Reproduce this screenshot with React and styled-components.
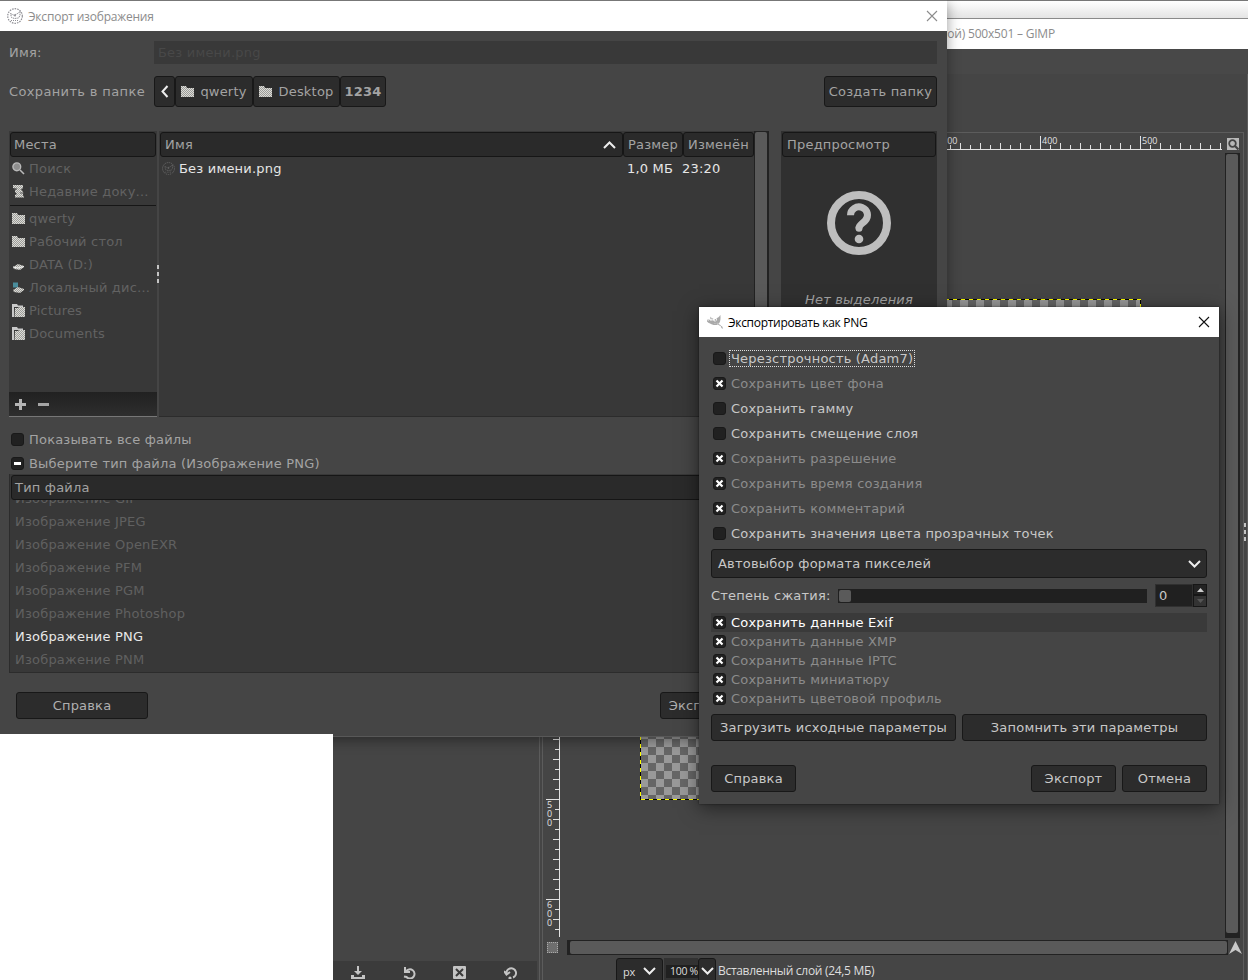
import React from 'react';
import styled, { createGlobalStyle } from 'styled-components';
import { SiGimp } from 'react-icons/si';

const placesTop = [
  { icon: 'search', label: 'Поиск' },
  { icon: 'recent', label: 'Недавние доку…' },
];

const placesBottom = [
  { icon: 'folder', label: 'qwerty' },
  { icon: 'folder', label: 'Рабочий стол' },
  { icon: 'drive', label: 'DATA (D:)' },
  { icon: 'system', label: 'Локальный дис…' },
  { icon: 'stack', label: 'Pictures' },
  { icon: 'stack', label: 'Documents' },
];

const fileTypes = ['GIF', 'JPEG', 'OpenEXR', 'PFM', 'PGM', 'Photoshop', 'PNG', 'PNM'];

const pngOptions = [
  { label: 'Черезстрочность (Adam7)', on: false, focus: true },
  { label: 'Сохранить цвет фона', on: true },
  { label: 'Сохранить гамму', on: false },
  { label: 'Сохранить смещение слоя', on: false },
  { label: 'Сохранить разрешение', on: true },
  { label: 'Сохранить время создания', on: true },
  { label: 'Сохранить комментарий', on: true },
  { label: 'Сохранить значения цвета прозрачных точек', on: false },
];

const metaOptions = ['данные Exif', 'данные XMP', 'данные IPTC', 'миниатюру', 'цветовой профиль'];

/* icons */

const Dither = () => (
  <defs>
    <pattern id="dither" width="2" height="2" patternUnits="userSpaceOnUse">
      <rect width="2" height="2" fill="#dcdcd8" />
      <rect width="1" height="1" fill="#9c9c98" />
      <rect x="1" y="1" width="1" height="1" fill="#9c9c98" />
    </pattern>
  </defs>
);

const placeShapes = {
  folder: <path d="M0 1h5l1 2h7v9H0z" fill="url(#dither)" />,
  search: (
    <>
      <circle cx="4.8" cy="4.8" r="3.9" fill="#8e8e8e" stroke="#b9b9b9" strokeWidth="1.4" />
      <path d="M8 8l4 4" stroke="#b9b9b9" strokeWidth="1.6" />
    </>
  ),
  recent: (
    <>
      <path d="M1 0h10v3l-2 1.5 2 2v4l1 1v1H3V10l2-1-2-2 0-2 2-1-4-1z" fill="url(#dither)" />
      <path d="M2 4h3M8 8h4" stroke="#5e5e5e" />
    </>
  ),
  drive: (
    <>
      <path d="M1 9l5-3 6 2v1l-4 3-6-1z" fill="url(#dither)" />
      <path d="M1 9l5 1 6-1.5" stroke="#eee" fill="none" />
    </>
  ),
  system: (
    <>
      <path d="M1 1.5h5v5H1z" fill="#4a8d9c" />
      <path d="M1 9l5-3 6 2v1l-4 3-6-1z" fill="url(#dither)" />
    </>
  ),
  stack: (
    <>
      <path d="M0 0h5l1 1.5h5V3H2v10H0z" fill="#c9c9c9" />
      <path d="M3 4h3l1-1h6v10H2.5z" fill="url(#dither)" />
    </>
  ),
};

const PlaceIcon = ({ name }) => (
  <svg width="13" height="13" viewBox="0 0 13 13">
    <Dither />
    {placeShapes[name]}
  </svg>
);

const Chevron = ({ d = 'M1 1l5.5 5.5L12 1', w = 13, h = 8, stroke = 2 }) => (
  <svg width={w} height={h} viewBox={`0 0 ${w} ${h}`}>
    <path d={d} fill="none" stroke="#ededed" strokeWidth={stroke} />
  </svg>
);

const CloseIcon = ({ color }) => (
  <svg width="12" height="12" viewBox="0 0 12 12">
    <path d="M1 1l10 10M11 1L1 11" stroke={color} strokeWidth="1.1" />
  </svg>
);

const Stamp = ({ size, color = '#8f8f95' }) => (
  <svg width={size} height={size} viewBox="0 0 16 16" fill="none" stroke={color}>
    <circle cx="8" cy="8" r="7.3" strokeDasharray="1.6 1" strokeWidth="1.2" />
    <path d="M3.5 5.5l3 1.5 3.5-1 3-2.5v4L11.5 10l-4 .5-3-1z" strokeWidth="1" strokeDasharray="1.5 .7" />
    <path d="M4 12.5h8" strokeWidth="1" strokeDasharray="1 1" />
    <circle cx="8" cy="7.5" r="1" fill={color} stroke="none" />
  </svg>
);

const QuestionIcon = () => (
  <svg width="64" height="64" viewBox="0 0 64 64" fill="none" stroke="#bebebe">
    <circle cx="32" cy="32" r="28" strokeWidth="8" />
    <path d="M23.5 24.2a8.5 8.2 0 1 1 14.6 5.6C34.8 33 32 34.200 32 37" strokeWidth="7" />
    <circle cx="32" cy="37.300" r="3.500" fill="#bebebe" stroke="none" />
    <circle cx="32" cy="48" r="4.300" fill="#bebebe" stroke="none" />
  </svg>
);

const dockShapes = [
  <path key="save" d="M6 0h2v5h3L7 9 3 5h3zM0 9h3v2h8V9h3v4H0z" fill="#c4c4c4" />,
  <path key="undo" d="M3 1v5h5M4 5.500a4.600 4.600 0 1 1 .5 5.500L2 10.500" fill="none" stroke="#c4c4c4" strokeWidth="2" />,
  <g key="del">
    <rect width="13" height="13" rx="1" fill="#c4c4c4" />
    <path d="M3 3l7 7M10 3l-7 7" stroke="#3a3a3a" strokeWidth="2" />
  </g>,
  <g key="reset">
    <path d="M2.500 8a4.800 4.800 0 1 1 6.500 3.500M0 5l2.500 3.500L6 6" fill="none" stroke="#c4c4c4" strokeWidth="2" />
    <circle cx="6" cy="12" r="1.600" fill="#c4c4c4" />
  </g>,
];

const range = (from, to) => Array.from({ length: to - from + 1 }, (_, i) => from + i);
const tickSize = (i) => (i % 10 === 0 ? 13 : i % 2 === 0 ? 6 : 4);

const HRuler = () => (
  <svg width="662" height="17" shapeRendering="crispEdges">
    <path d="M0 16.500h662" stroke="#e2e2e2" />
    {range(-8, 58).map((i) => (
      <rect key={i} x={80 + i * 10} y={16 - tickSize(i)} width="1" height={tickSize(i)} fill="#e2e2e2" />
    ))}
    {range(0, 5).map((i) => (
      <RulerText key={i} x={82 + i * 100} y="11">{i * 100}</RulerText>
    ))}
  </svg>
);

const VRuler = () => (
  <svg width="17" height="787" shapeRendering="crispEdges">
    <path d="M16.500 0v787" stroke="#e2e2e2" />
    {range(-14, 63).map((i) => (
      <rect key={i} x={16 - tickSize(i)} y={149 + i * 10} width={tickSize(i)} height="1" fill="#e2e2e2" />
    ))}
    {range(0, 6).map((i) =>
      String(i * 100).split('').map((c, n) => (
        <RulerText key={i + '-' + n} x="4" y={158 + i * 100 + n * 9}>{c}</RulerText>
      ))
    )}
  </svg>
);

const Check = ({ on, mixed }) => (
  <Box>
    {on && (
      <svg width="9" height="9" viewBox="0 0 9 9">
        <path d="M1.500 1.500l6 6M7.500 1.500l-6 6" stroke="#fff" strokeWidth="2.200" />
      </svg>
    )}
    {mixed && <Dash />}
  </Box>
);

const MainWindow = () => (
  <Gimp>
    <BackStrip />
    <GimpTitle>слой) 500x501 – GIMP</GimpTitle>
    <MenuStrip />
    <Workspace>
      <Dock>
        <DockBody />
        <DockBar>
          {dockShapes.map((shape, i) => (
            <svg key={i} width="14" height="13" viewBox="0 0 14 13">{shape}</svg>
          ))}
        </DockBar>
      </Dock>
      <Center>
        <RulerRow>
          <HRuler />
          <svg width="12" height="12" viewBox="0 0 12 12">
            <rect width="12" height="12" fill="#b8b8b8" />
            <circle cx="5.500" cy="5.500" r="3.300" fill="none" stroke="#444" strokeWidth="1.800" />
            <path d="M8 8l3.500 3.500" stroke="#444" strokeWidth="2.200" />
          </svg>
        </RulerRow>
        <CanvasRow>
          <VRuler />
          <Viewport>
            <CanvasImage>
              <svg width="501" height="501" fill="none" shapeRendering="crispEdges">
                <rect x=".5" y=".5" width="500" height="500" stroke="#000" />
                <rect x=".5" y=".5" width="500" height="500" stroke="#ff0" strokeDasharray="4 4" />
              </svg>
            </CanvasImage>
          </Viewport>
          <VScroll><Thumb /></VScroll>
        </CanvasRow>
        <ScrollRow>
          <QuickMask />
          <HScroll><Thumb /></HScroll>
          <svg width="13" height="14" viewBox="0 0 13 14">
            <path d="M6.500 0L13 13 6.500 9 0 13z" fill="#c9c9c9" />
          </svg>
        </ScrollRow>
        <StatusRow>
          <UnitBox>px<Chevron /></UnitBox>
          <ZoomEntry><span>100 %</span></ZoomEntry>
          <ZoomArrow><Chevron /></ZoomArrow>
          <StatusText>Вставленный слой (24,5 МБ)</StatusText>
        </StatusRow>
      </Center>
      <RightDock><Grip /></RightDock>
    </Workspace>
  </Gimp>
);

const ExportDialog = () => (
  <Export>
    <TitleBar $dim>
      <Stamp size={16} />
      <TitleText $dim>Экспорт изображения</TitleText>
      <CloseIcon color="#8c8c8c" />
    </TitleBar>
    <NameRow>
      <FieldLabel>Имя:</FieldLabel>
      <NameInput>Без имени.png</NameInput>
    </NameRow>
    <PathRow>
      <FieldLabel $track={0.36}>Сохранить в папке</FieldLabel>
      <PathButton $w={21}><Chevron w={8} h={13} d="M6.500 1L1.500 6.500l5 5.500" /></PathButton>
      <PathButton $w={78}><PlaceIcon name="folder" />qwerty</PathButton>
      <PathButton $w={87}><PlaceIcon name="folder" />Desktop</PathButton>
      <PathButton $w={46} $bold>1234</PathButton>
      <CreateButton>Создать папку</CreateButton>
    </PathRow>
    <Browser>
      <Places>
        <Header $w={146}>Места</Header>
        <PlaceGroup>
          {placesTop.map((p) => (
            <Place key={p.label}><PlaceIcon name={p.icon} />{p.label}</Place>
          ))}
        </PlaceGroup>
        <PlaceGroup $line>
          {placesBottom.map((p) => (
            <Place key={p.label}><PlaceIcon name={p.icon} />{p.label}</Place>
          ))}
        </PlaceGroup>
        <PlaceBar>
          <svg width="11" height="11"><path d="M5.500 0v11M0 5.500h11" stroke="#b5b5b5" strokeWidth="3" /></svg>
          <svg width="11" height="11"><path d="M0 5.500h11" stroke="#a5a5a5" strokeWidth="3" /></svg>
        </PlaceBar>
      </Places>
      <Split><Grip /></Split>
      <Files>
        <FileHeads>
          <Header $w={463} $pad={4}>Имя<Chevron d="M1 7l5.500-5.500L12 7" /></Header>
          <Header $w={60} $pad={4}>Размер</Header>
          <Header $w={71} $pad={4}>Изменён</Header>
        </FileHeads>
        <FileRow>
          <Stamp size={13} color="#666" />
          <FileName>Без имени.png</FileName>
          <FileSize>1,0 МБ</FileSize>
          <span>23:20</span>
        </FileRow>
      </Files>
      <FileScroll><Thumb /></FileScroll>
      <Preview>
        <Header $w={154} $pad={4}>Предпросмотр</Header>
        <PreviewBody>
          <QuestionIcon />
          <em>Нет выделения</em>
        </PreviewBody>
      </Preview>
    </Browser>
    <Toggles>
      <Toggle><Check />Показывать все файлы</Toggle>
      <Toggle><Check mixed />Выберите тип файла (Изображение PNG)</Toggle>
    </Toggles>
    <TypeList>
      <Header $w={927}>Тип файла</Header>
      <TypeRows>
        {fileTypes.map((t) => (
          <TypeRow key={t} $active={t === 'PNG'}>Изображение {t}</TypeRow>
        ))}
      </TypeRows>
    </TypeList>
    <ExportFooter>
      <Button $w={132} $dim>Справка</Button>
      <Button $w={132} $dim>Экспортировать</Button>
      <Button $w={132} $dim>Отмена</Button>
    </ExportFooter>
  </Export>
);

const PngDialog = () => (
  <Png>
    <TitleBar>
      <SiGimp size={16} color="#a9a9a9" />
      <TitleText>Экспортировать как PNG</TitleText>
      <CloseIcon color="#111" />
    </TitleBar>
    <PngBody>
      {pngOptions.map((o) => (
        <Option key={o.label} $on={o.on}>
          <Check on={o.on} />
          <OptionText $focus={o.focus}>{o.label}</OptionText>
        </Option>
      ))}
      <Combo>Автовыбор формата пикселей<Chevron /></Combo>
      <ScaleRow>
        <span>Степень сжатия:</span>
        <Slider><Knob /></Slider>
        <Spin>
          <SpinValue>0</SpinValue>
          <SpinButtons>
            <SpinButton><svg width="7" height="4"><path d="M0 4l3.500-4L7 4z" fill="#ccc" /></svg></SpinButton>
            <SpinButton $off><svg width="7" height="4"><path d="M0 0l3.500 4L7 0z" fill="#555" /></svg></SpinButton>
          </SpinButtons>
        </Spin>
      </ScaleRow>
      {metaOptions.map((m, i) => (
        <MetaOption key={m} $active={i === 0}>
          <Check on />
          <OptionText>Сохранить {m}</OptionText>
        </MetaOption>
      ))}
      <ParamRow>
        <Button $w={245}>Загрузить исходные параметры</Button>
        <Button $w={245}>Запомнить эти параметры</Button>
      </ParamRow>
      <PngFooter>
        <Button $w={85}>Справка</Button>
        <Spacer />
        <Button $w={85}>Экспорт</Button>
        <Button $w={85}>Отмена</Button>
      </PngFooter>
    </PngBody>
  </Png>
);

const App = () => (
  <>
    <GlobalStyle />
    <Desktop>
      <MainWindow />
      <ExportDialog />
      <BlankWindow />
      <PngDialog />
    </Desktop>
  </>
);

export default App;

const GlobalStyle = createGlobalStyle`
  body {
    margin: 0;
    overflow: hidden;
  }
  * {
    box-sizing: border-box;
  }
  svg {
    display: block;
    flex: none;
  }
`
const Desktop = styled.div`
  position: relative;
  width: 1248px;
  height: 980px;
  overflow: hidden;
  background: #fff;
  font-family: 'DejaVu Sans', sans-serif;
  font-size: 13px;
  letter-spacing: 0.2px;
  white-space: nowrap;
`
/* windows */
const Gimp = styled.div`
  position: absolute;
  left: 333px;
  top: 0;
  width: 915px;
  height: 980px;
  display: flex;
  flex-direction: column;
  background: #454545;
`
const Export = styled.div`
  position: absolute;
  left: 0;
  top: 0;
  width: 947px;
  height: 737px;
  display: flex;
  flex-direction: column;
  background: #454545;
  color: #a3a3a3;
  border-top: 1px solid #777;
  border-bottom: 1px solid #585858;
  box-shadow: 0 3px 12px rgba(0, 0, 0, 0.4);
`
const BlankWindow = styled.div`
  position: absolute;
  left: 0;
  top: 734px;
  width: 333px;
  height: 246px;
  background: #fff;
`
const Png = styled.div`
  position: absolute;
  left: 699px;
  top: 307px;
  width: 520px;
  height: 497px;
  background: #454545;
  color: #c8c8c8;
  box-shadow: 0 4px 18px rgba(0, 0, 0, 0.5), 0 0 2px rgba(0, 0, 0, 0.5);
`
const TitleBar = styled.div`
  display: flex;
  align-items: center;
  height: 30px;
  flex: none;
  padding: ${(p) => (p.$dim ? '0 9px 0 7px' : '0 9px 0 8px')};
  background: #fff;
`
const TitleText = styled.div`
  flex: 1;
  padding-left: 5px;
  font-family: 'Open Sans', 'Noto Sans', sans-serif;
  font-size: 12px;
  letter-spacing: ${(p) => (p.$dim ? '-0.2px' : '-0.3px')};
  color: ${(p) => (p.$dim ? '#8c8c8c' : '#000')};
`
/* main window */
const BackStrip = styled.div`
  height: 19px;
  border-top: 1px solid #777;
  border-bottom: 1px solid #8a8a8a;
  background: linear-gradient(#fff, #e4e4e4);
`
const GimpTitle = styled.div`
  height: 30px;
  padding-right: 193px;
  background: #fff;
  color: #8c8c8c;
  text-align: right;
  line-height: 30px;
  font-family: 'Open Sans', 'Noto Sans', sans-serif;
  font-size: 12px;
  letter-spacing: -0.2px;
`
const MenuStrip = styled.div`
  height: 25px;
  background: #484848;
`
const Workspace = styled.div`
  display: flex;
  flex: 1;
`
const Dock = styled.div`
  width: 207px;
  display: flex;
  flex-direction: column;
  border-right: 1px solid #5c5c5c;
`
const DockBody = styled.div`
  flex: 1;
`
const DockBar = styled.div`
  display: flex;
  gap: 37px;
  width: 204px;
  height: 19px;
  padding: 5px 0 0 18px;
  background: #3b3b3b;
`
const Center = styled.div`
  width: 702px;
  margin: 58px 0 0 2px;
  border: 1px solid #5c5c5c;
  border-bottom: 0;
`
const RulerRow = styled.div`
  display: flex;
  align-items: flex-end;
  gap: 5px;
  padding-left: 17px;
`
const CanvasRow = styled.div`
  display: flex;
  height: 790px;
`
const Viewport = styled.div`
  position: relative;
  width: 662px;
  height: 787px;
  overflow: hidden;
`
const CanvasImage = styled.div`
  position: absolute;
  left: 80px;
  top: 149px;
  width: 501px;
  height: 501px;
  background: repeating-conic-gradient(#666 0 25%, #999 0 50%) 0 0 / 16px 16px;
`
const Thumb = styled.div`
  flex: 1;
  border-radius: 2px;
  background: #5a5a5a;
`
const VScroll = styled.div`
  display: flex;
  width: 15px;
  height: 785px;
  margin: 3px 0 0 3px;
  padding: 1px 2px 5px 1px;
  background: #222;
`
const ScrollRow = styled.div`
  display: flex;
  align-items: center;
  height: 15px;
`
const QuickMask = styled.div`
  width: 11px;
  height: 11px;
  margin: 0 9px 0 4px;
  border: 1px dotted #aaa;
  background: #6e6e6e;
`
const HScroll = styled.div`
  display: flex;
  width: 661px;
  height: 15px;
  margin-right: 1px;
  padding: 1px 1px 1px 3px;
  background: #222;
`
const StatusRow = styled.div`
  display: flex;
  height: 22px;
  margin-top: 3px;
  padding-left: 73px;
  color: #ddd;
  font-family: 'Open Sans', 'Noto Sans', sans-serif;
  font-size: 11px;
  letter-spacing: -0.3px;
`
const UnitBox = styled.div`
  display: flex;
  align-items: center;
  justify-content: space-between;
  width: 47px;
  height: 26px;
  padding: 0 6px;
  border: 1px solid #181818;
  border-radius: 3px;
  background: #2c2c2c;
`
const ZoomEntry = styled.div`
  width: 34px;
  height: 26px;
  margin-left: 1px;
  padding: 7px 0 0 2px;
  background: #323232;
  span {
    display: block;
    padding-left: 4px;
    background: #202020;
    font-size: 10.5px;
    line-height: 13px;
  }
`
const ZoomArrow = styled.div`
  display: flex;
  align-items: center;
  justify-content: center;
  width: 18px;
  height: 26px;
  border: 1px solid #181818;
  border-radius: 3px;
  background: #2c2c2c;
`
const StatusText = styled.div`
  padding-left: 2px;
  font-size: 12px;
  line-height: 25px;
`
const RightDock = styled.div`
  display: flex;
  align-items: center;
  width: 4px;
  padding: 10px 0 0 0;
  border-right: 1px solid #5c5c5c;
`
const RulerText = styled.text`
  fill: #e2e2e2;
  font-family: 'Open Sans', 'Noto Sans', sans-serif;
  font-size: 9px;
  letter-spacing: 0;
`
const Grip = styled.div`
  width: 2px;
  height: 18px;
  background: repeating-linear-gradient(#c4c4c4 0 4px, transparent 4px 7px);
`
/* shared controls */
const Box = styled.span`
  display: flex;
  align-items: center;
  justify-content: center;
  flex: none;
  width: 13px;
  height: 13px;
  border: 1px solid #191919;
  border-radius: 3px;
  background: #212121;
`
const Dash = styled.span`
  width: 7px;
  height: 3px;
  background: #fff;
`
const Button = styled.div`
  display: flex;
  align-items: center;
  justify-content: center;
  flex: none;
  width: ${(p) => p.$w}px;
  height: 27px;
  border: 1px solid #181818;
  border-radius: 3px;
  background: #2c2c2c;
  color: ${(p) => (p.$dim ? '#b0b0b0' : '#c8c8c8')};
`
const Header = styled.div`
  display: flex;
  align-items: center;
  justify-content: space-between;
  flex: none;
  width: ${(p) => p.$w}px;
  height: 25px;
  padding: 0 6px 0 ${(p) => p.$pad || 3}px;
  border: 1px solid #161616;
  border-radius: 3px;
  background: #2a2a2a;
  color: #a3a3a3;
`
/* export dialog */
const NameRow = styled.div`
  display: flex;
  align-items: center;
  height: 23px;
  margin: 10px 10px 0 9px;
`
const FieldLabel = styled.div`
  width: 145px;
  letter-spacing: ${(p) => p.$track || 0.2}px;
`
const NameInput = styled.div`
  flex: 1;
  height: 23px;
  padding-left: 4px;
  line-height: 23px;
  background: #393939;
  color: #484848;
`
const PathRow = styled.div`
  display: flex;
  align-items: center;
  height: 31px;
  margin: 12px 10px 0 9px;
`
const PathButton = styled.div`
  display: flex;
  align-items: center;
  justify-content: center;
  gap: 6px;
  width: ${(p) => p.$w}px;
  height: 31px;
  border: 1px solid #181818;
  border-radius: 3px;
  background: #2c2c2c;
  font-weight: ${(p) => (p.$bold ? 'bold' : 'normal')};
`
const CreateButton = styled(PathButton)`
  width: 113px;
  margin-left: auto;
`
const Browser = styled.div`
  display: flex;
  height: 286px;
  margin: 24px 10px 0 9px;
`
const Places = styled.div`
  display: flex;
  flex-direction: column;
  width: 148px;
  padding-top: 1px;
  background: #383838;
  border-bottom: 1px solid #777;
  ${Header} {
    margin-left: 1px;
  }
`
const PlaceGroup = styled.div`
  margin: 0 1px;
  border-top: ${(p) => (p.$line ? '1px solid #161616' : '0')};
  padding-top: ${(p) => (p.$line ? '1px' : '0')};
  margin-top: ${(p) => (p.$line ? '2px' : '0')};
`
const Place = styled.div`
  display: flex;
  align-items: center;
  gap: 4px;
  height: 23px;
  padding-left: 2px;
  color: #626262;
`
const PlaceBar = styled.div`
  display: flex;
  align-items: center;
  gap: 12px;
  height: 24px;
  margin-top: auto;
  padding-left: 6px;
  background: linear-gradient(#212121, #2e2e2e);
`
const Split = styled.div`
  display: flex;
  align-items: center;
  width: 2px;
`
const Files = styled.div`
  width: 595px;
  padding: 1px 0 0 1px;
  background: #383838;
  border-bottom: 1px solid #2c2c2c;
`
const FileHeads = styled.div`
  display: flex;
`
const FileRow = styled.div`
  display: flex;
  align-items: center;
  height: 23px;
  padding-left: 2px;
  color: #e6e6e6;
`
const FileName = styled.div`
  width: 448px;
  padding-left: 4px;
`
const FileSize = styled.div`
  width: 59px;
  padding-left: 4px;
`
const FileScroll = styled.div`
  display: flex;
  width: 15px;
  padding: 1px 2px 1px 1px;
  background: #222;
`
const Preview = styled.div`
  width: 156px;
  margin-left: 12px;
  padding: 1px;
  background: #303030;
`
const PreviewBody = styled.div`
  display: flex;
  flex-direction: column;
  align-items: center;
  gap: 37px;
  padding-top: 34px;
`
const Toggles = styled.div`
  padding: 10px 0 0 11px;
`
const Toggle = styled.div`
  display: flex;
  align-items: center;
  gap: 5px;
  height: 24px;
`
const TypeList = styled.div`
  height: 199px;
  margin: -1px 10px 0 9px;
  padding: 1px;
  background: #383838;
  border: 1px solid #2c2c2c;
  border-width: 0 0 1px 1px;
  overflow: hidden;
`
const TypeRows = styled.div`
  display: flex;
  flex-direction: column;
  justify-content: flex-end;
  height: 171px;
  overflow: hidden;
`
const TypeRow = styled.div`
  flex: none;
  height: 23px;
  padding-left: 4px;
  line-height: 23px;
  color: ${(p) => (p.$active ? '#e8e8e8' : '#606060')};
`
const ExportFooter = styled.div`
  display: flex;
  gap: 6px;
  padding: 19px 10px 0 16px;
  ${Button}:first-child {
    margin-right: 506px;
  }
`
/* png dialog */
const PngBody = styled.div`
  display: flex;
  flex-direction: column;
  padding: 9px 12px 0;
`
const Option = styled.div`
  display: flex;
  align-items: center;
  gap: 4px;
  height: 25px;
  padding-left: 2px;
  color: ${(p) => (p.$on ? '#8c8c8c' : '#c8c8c8')};
`
const OptionText = styled.span`
  padding: 0 1px;
  outline: ${(p) => (p.$focus ? '1px dotted #ddd' : '0')};
`
const Combo = styled.div`
  display: flex;
  align-items: center;
  justify-content: space-between;
  height: 29px;
  margin-top: 3px;
  padding: 0 5px 0 6px;
  border: 1px solid #181818;
  border-radius: 3px;
  background: #2c2c2c;
`
const ScaleRow = styled.div`
  display: flex;
  align-items: center;
  height: 35px;
`
const Slider = styled.div`
  width: 309px;
  height: 14px;
  margin: 0 8px 0 auto;
  padding: 1px;
  background: #202020;
`
const Knob = styled.div`
  width: 12px;
  height: 12px;
  border-radius: 2px;
  background: #5a5a5a;
`
const Spin = styled.div`
  display: flex;
  width: 52px;
  height: 23px;
`
const SpinValue = styled.div`
  flex: 1;
  padding-left: 3px;
  border: 1px solid #303030;
  background: #202020;
  line-height: 21px;
`
const SpinButtons = styled.div`
  width: 14px;
`
const SpinButton = styled.div`
  display: flex;
  align-items: center;
  justify-content: center;
  height: ${(p) => (p.$off ? 12 : 11)}px;
  border: 1px solid #161616;
  background: ${(p) => (p.$off ? '#333' : '#232323')};
`
const MetaOption = styled(Option)`
  height: 19px;
  color: ${(p) => (p.$active ? '#fff' : '#8c8c8c')};
  background: ${(p) => (p.$active ? '#3a3a3a' : 'transparent')};
`
const ParamRow = styled.div`
  display: flex;
  gap: 6px;
  margin-top: 6px;
`
const PngFooter = styled.div`
  display: flex;
  gap: 6px;
  margin-top: 24px;
`
const Spacer = styled.div`
  flex: 1;
`
